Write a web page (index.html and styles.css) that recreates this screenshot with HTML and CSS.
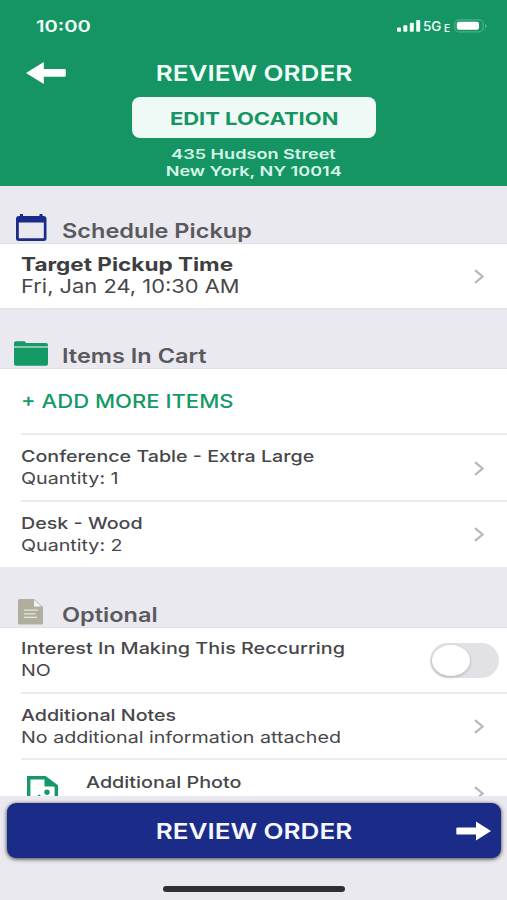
FILE: index.html
```
<!DOCTYPE html>
<html lang="en">
<head>
<meta charset="utf-8">
<title>Review Order</title>
<link rel="stylesheet" href="styles.css">
</head>
<body>
<div class="app">
  <header class="header">
    <div class="status">
      <span class="time wide">10:00</span>
      <div class="signal">
        <svg width="24" height="12" viewBox="0 0 24 12" fill="#f2fff9"><rect x="0" y="7.5" width="4" height="4.3" rx="1"/><rect x="6.3" y="5.2" width="4" height="6.6" rx="1"/><rect x="12.8" y="2.7" width="4" height="9.1" rx="1"/><rect x="19.2" y="0" width="4" height="11.8" rx="1"/></svg>
        <span class="net">5G</span><span class="edge">E</span>
        <svg class="battery" width="34" height="14" viewBox="0 0 34 14"><rect x=".8" y=".8" width="28.4" height="12" rx="4" fill="none" stroke="#4aae82" stroke-width="1.2"/><rect x="2.8" y="2.8" width="22.2" height="8" rx="2" fill="#fff"/><path d="M31 5v4q1.6-.5 1.6-2T31 5z" fill="#5db690"/></svg>
      </div>
    </div>
    <div class="titlebar">
      <svg class="back" width="40" height="22" viewBox="0 0 40 22"><path d="M0 11 17.800 0v7H38.500q1.300 0 1.300 1.300v5.200q0 1.300-1.300 1.300H17.800V22z" fill="#fff"/></svg>
      <h1 class="title wide">REVIEW ORDER</h1>
    </div>
    <button class="edit"><span class="wide">EDIT LOCATION</span></button>
    <address class="address"><span class="wide">435 Hudson Street</span><span class="wide">New York, NY 10014</span></address>
  </header>

  <main class="content">
    <div class="section first">
      <svg class="sicon" width="36" height="30" viewBox="0 0 36 30"><path d="M7.500 1v4M27 1v4" stroke="#1b2b8a" stroke-width="3"/><path fill-rule="evenodd" d="M5 3h24.500q3 0 3 3v19.500q0 2.500-3 2.500H5q-3 0-3-2.500V6q0-3 3-3zm-.2 6.500v15.800h25V9.500z" fill="#1b2b8a"/></svg>
      <h2 class="wide">Schedule Pickup</h2>
    </div>
    <div class="row pickup">
      <div class="text"><strong class="wide">Target Pickup Time</strong><span class="wide">Fri, Jan 24, 10:30 AM</span></div>
      <svg class="chev" width="10" height="15" viewBox="0 0 10 15"><path d="M1 1.200 8.600 7.500 1 13.800"/></svg>
    </div>

    <div class="section cart">
      <svg class="sicon" width="36" height="30" viewBox="0 0 36 30"><path d="M0 6V5q0-1.700 2-1.700h8q1.500 0 2 1.700h20q2 0 2 2v1H0zM0 9.500h34V26q0 1.800-2 1.800H2Q0 27.800 0 26z" fill="#159966"/><path d="M0 8h34v1.500H0z" fill="#8bccb0"/></svg>
      <h2 class="wide">Items In Cart</h2>
    </div>
    <div class="row add"><a class="wide">+ ADD MORE ITEMS</a></div>
    <div class="row item">
      <div class="text"><b class="wide">Conference Table - Extra Large</b><span class="wide">Quantity: 1</span></div>
      <svg class="chev" width="10" height="15" viewBox="0 0 10 15"><path d="M1 1.200 8.600 7.500 1 13.800"/></svg>
    </div>
    <div class="row item last">
      <div class="text"><b class="wide">Desk - Wood</b><span class="wide">Quantity: 2</span></div>
      <svg class="chev" width="10" height="15" viewBox="0 0 10 15"><path d="M1 1.200 8.600 7.500 1 13.800"/></svg>
    </div>

    <div class="section optional">
      <svg class="sicon" width="36" height="30" viewBox="0 0 36 30"><path d="M6 2h14l9 8v16q0 1.500-1.500 1.500h-22Q4 27.500 4 26V4q0-2 2-2z" fill="#b0af9f"/><path d="M20 3v6.500h7.500z" fill="#f4f3f5"/><path d="M10 13.200h14M10 16.800h11.500M10 20.300h13" stroke="#e7e5dd" stroke-width="1.300"/></svg>
      <h2 class="wide">Optional</h2>
    </div>
    <div class="row option recurring">
      <div class="text"><b class="wide">Interest In Making This Reccurring</b><span class="wide">NO</span></div>
      <span class="toggle"><span class="knob"></span></span>
    </div>
    <div class="row option notes">
      <div class="text"><b class="wide">Additional Notes</b><span class="wide">No additional information attached</span></div>
      <svg class="chev" width="10" height="15" viewBox="0 0 10 15"><path d="M1 1.200 8.600 7.500 1 13.800"/></svg>
    </div>
    <div class="row photo">
      <svg class="picon" width="32" height="36" viewBox="0 0 32 36"><path d="M1.700 1.700H18L29.300 10v24H1.700z" fill="none" stroke="#159966" stroke-width="3.400"/><path d="M17.500 1v9.500H30z" fill="#159966"/><circle cx="20" cy="16.200" r="2.700" fill="#159966"/><path d="M4 27l8.200-8.800L20 27z" fill="#159966"/></svg>
      <b class="wide">Additional Photo</b>
      <svg class="chev" width="10" height="15" viewBox="0 0 10 15"><path d="M1 1.200 8.600 7.500 1 13.800"/></svg>
    </div>
  </main>

  <footer class="footer">
    <button class="submit"><span class="wide">REVIEW ORDER</span>
      <svg class="next" width="35" height="20" viewBox="0 0 35 20"><path d="M35 10 20 19.500V13.600H1.500Q.3 13.600.3 12.400V7.600Q.3 6.400 1.500 6.400H20V.5z" fill="#fff"/></svg>
    </button>
    <div class="home"></div>
  </footer>
</div>
</body>
</html>
```
FILE: styles.css
```
* { box-sizing: border-box; }
body { margin: 0; font-family: Inter, "Liberation Sans", sans-serif; color: #47474a; background: #eae9ef; }
h1, h2 { margin: 0; }
button { border: 0; padding: 0; font-family: inherit; }
svg { display: block; flex: none; }
.app { width: 507px; height: 900px; display: flex; flex-direction: column; overflow: hidden; }
.wide { display: block; width: max-content; white-space: nowrap; transform: scaleX(1.192); transform-origin: 0 50%; }

.header { height: 186px; flex: none; background: #159564; color: #f0fff8; display: flex; flex-direction: column; align-items: center; }
.status { width: 100%; height: 52px; padding: 0 19px 0 36px; display: flex; justify-content: space-between; align-items: center; }
.time { font-size: 16px; font-weight: 600; line-height: 20px; transform: scaleX(1.26); }
.signal { display: flex; align-items: center; height: 14px; }
.net { font-size: 13.5px; font-weight: 500; line-height: 14px; margin-left: 2px; width: 21px; }
.edge { font-size: 10px; font-weight: 600; line-height: 10px; margin: 3px 4px 0 0; width: 6px; }
.titlebar { width: 100%; height: 42px; display: grid; grid-template-columns: 1fr auto 1fr; align-items: center; }
.back { margin-left: 26px; }
.title { font-size: 22px; font-weight: 600; line-height: 26px; transform: scaleX(1.185); transform-origin: 50% 50%; }
.edit { width: 244px; height: 41px; margin: 3px 0 8px 1px; padding-top: 1px; flex: none; border-radius: 8px; background: #eff9f5; color: #159564; display: flex; align-items: center; justify-content: center; font-size: 17.5px; font-weight: 700; }
.edit .wide { transform: scaleX(1.255); transform-origin: 50% 50%; }
.address { font-style: normal; font-size: 13.5px; font-weight: 600; line-height: 17px; display: flex; flex-direction: column; align-items: center; color: #d7f5e8; }
.address .wide { transform: scaleX(1.34); transform-origin: 50% 50%; }

.content { height: 610px; flex: none; overflow: hidden; background: #fff; }
.section { display: flex; align-items: flex-end; padding-left: 14px; background: #eae9ef; border-bottom: 1px solid #e0e0e5; }
.section h2 { margin-left: 12px; font-size: 20px; font-weight: 600; line-height: 24px; color: #59595e; transform: scaleX(1.176); }
.first { height: 58px; }
.cart { height: 61px; border-top: 2px solid #e4e4e8; }
.optional { height: 61px; }
.row { display: flex; justify-content: space-between; margin-left: 21px; padding-right: 23px; }
.text { font-size: 16.5px; line-height: 22px; }
b { font-weight: 500; }
.chev { align-self: center; fill: none; stroke: #b7b7bb; stroke-width: 2.2; }
.pickup { height: 64px; padding-top: 9px; }
.pickup .text { font-size: 18.5px; }
.pickup strong { font-weight: 700; color: #3e3e41; transform: scaleX(1.218); }
.pickup span { transform: scaleX(1.182); }
.pickup .chev { margin-top: -8px; }
.add { height: 66px; border-bottom: 2px solid #ececef; align-items: center; font-size: 18.5px; font-weight: 500; color: #159966; }
.item { height: 67px; padding-top: 10px; border-bottom: 2px solid #ececef; }
.item .text, .option .text { line-height: 22.3px; }
.item .chev, .option .chev { margin-top: -9px; }
.last { height: 65px; border: 0; }
.last .chev { margin-top: -11px; }
.option { height: 66px; border-bottom: 2px solid #ececef; padding-top: 10px; }
.recurring { padding-right: 8px; padding-top: 9px; }
.recurring b { transform: scaleX(1.199); }
.toggle { width: 69px; height: 35px; margin-top: 6px; border-radius: 30px; background: #e2e2e6; padding: 2px; }
.knob { display: block; width: 38px; height: 31px; border-radius: 50%; background: #fff; box-shadow: 0 1px 3px #aaaab0; }
.photo { justify-content: flex-start; font-size: 16.5px; line-height: 22px; padding-top: 11px; height: 66px; }
.photo b { transform: scaleX(1.2); }
.picon { margin: 5px 27px 0 6px; }
.photo .chev { margin: 15px 0 0 auto; align-self: flex-start; }

.footer { height: 104px; flex: none; background: #eae9ef; padding: 7px 6px 0 7px; display: flex; flex-direction: column; align-items: center; }
.submit { width: 100%; height: 55px; flex: none; border-radius: 9px; background: #1a2c87; color: #f5f6ff; box-shadow: 0 1px 4px #34343a; display: grid; grid-template-columns: 1fr auto 1fr; align-items: center; font-size: 22px; font-weight: 600; }
.submit .wide { grid-column: 2; transform: scaleX(1.185); transform-origin: 50% 50%; }
.next { justify-self: end; margin-right: 10px; }
.home { width: 182px; height: 6px; margin-top: 28px; border-radius: 3px; background: #303034; }
```
